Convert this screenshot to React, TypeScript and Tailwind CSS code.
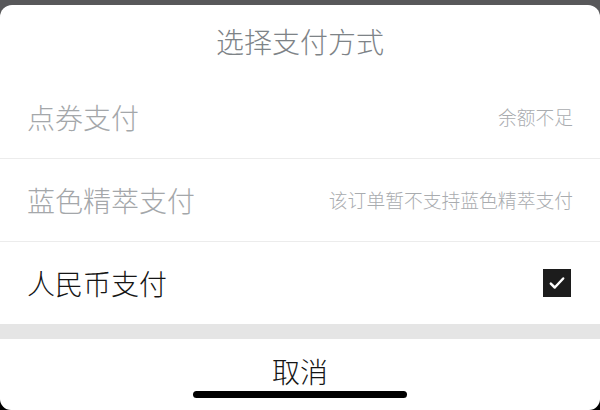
import React from 'react';

// 支付方式列表
const methods = [
  { label: '点券支付', note: '余额不足', disabled: true },
  { label: '蓝色精萃支付', note: '该订单暂不支持蓝色精萃支付', disabled: true },
  { label: '人民币支付', note: '', disabled: false, checked: true },
];

function CheckBox() {
  return (
    <div className="w-[28px] h-[28px] bg-[#1c1c1c] flex items-center justify-center">
      <svg width="18" height="18" viewBox="0 0 16 16" fill="none" stroke="white" strokeWidth="2.2" strokeLinecap="round" strokeLinejoin="round">
        <path d="M2.5 8.5l3.5 3.5 7.5-8" />
      </svg>
    </div>
  );
}

export default function App() {
  return (
    <div
      className="w-[600px] h-[410px] overflow-hidden flex flex-col bg-[linear-gradient(#58585a_50%,#000_50%)]"
      style={{ fontFamily: '"Noto Sans CJK SC", "Noto Sans", sans-serif' }}
    >
      <div className="h-[5px] shrink-0" />
      <div className="relative flex-1 bg-white rounded-t-[12px] rounded-b-[11px] flex flex-col font-light">
        <div className="h-[71px] shrink-0 flex items-center justify-center text-[28px] text-[#7e8387]">
          选择支付方式
        </div>

        {methods.map((m, i) => (
          <div
            key={m.label}
            className={
              i < 2
                ? 'h-[83px] shrink-0 flex items-center justify-between pl-[27px] pr-[27px] border-b border-[#ececec]'
                : 'h-[82px] shrink-0 flex items-center justify-between pl-[27px] pr-[29px]'
            }
          >
            <span className={m.disabled ? 'text-[28px] text-[#a4a7aa]' : 'text-[28px] text-[#151515]'}>
              {m.label}
            </span>
            {m.checked ? (
              <CheckBox />
            ) : (
              <span className="text-[18.8px] text-[#a9acaf]">{m.note}</span>
            )}
          </div>
        ))}

        <div className="h-[15px] shrink-0 bg-[#e5e5e5]" />

        <div className="flex-1 flex items-start justify-center pt-[18px]">
          <span className="text-[28px] text-[#151515] leading-none">取消</span>
        </div>

        {/* home indicator */}
        <div className="absolute left-[193px] top-[386px] w-[214px] h-[7px] rounded-full bg-black" />
      </div>
    </div>
  );
}
